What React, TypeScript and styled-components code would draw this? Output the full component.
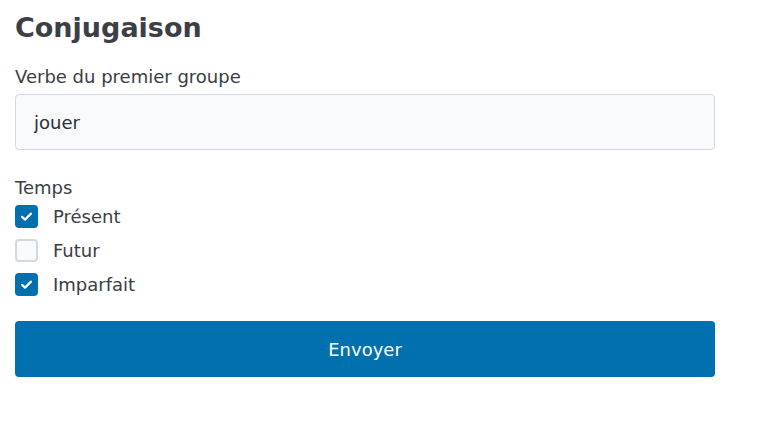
import React, { useState } from "react";
import styled, { createGlobalStyle } from "styled-components";

const GlobalStyle = createGlobalStyle`
  html, body {
    margin: 0;
    padding: 0;
    background: #ffffff;
  }
  body {
    font-family: "DejaVu Sans", "Liberation Sans", sans-serif;
    color: #3a3d42;
  }
`;

const Form = styled.form`
  width: 700px;
  padding: 11px 15px 0 15px;
  display: flex;
  flex-direction: column;
`;

const Title = styled.h1`
  margin: 0;
  font-size: 27px;
  line-height: 34px;
  font-weight: 700;
  color: #3c4046;
`;

const FieldLabel = styled.label`
  margin-top: 21px;
  font-size: 18px;
  line-height: 22px;
  color: #3a3d42;
`;

const TextInput = styled.input`
  margin-top: 6px;
  box-sizing: border-box;
  width: 100%;
  height: 56px;
  padding: 0 18px;
  border: 1px solid #d3d8e6;
  border-radius: 4px;
  background: #f9fafb;
  font-family: inherit;
  font-size: 18px;
  color: #2b2f36;
  outline: none;
`;

const Group = styled.div`
  margin-top: 27px;
  display: flex;
  flex-direction: column;
`;

const GroupTitle = styled.div`
  font-size: 18px;
  line-height: 22px;
  color: #3a3d42;
`;

const Options = styled.div`
  margin-top: 6px;
  display: flex;
  flex-direction: column;
  gap: 11px;
`;

const OptionRow = styled.label`
  display: flex;
  align-items: center;
  gap: 15px;
  height: 23px;
  font-size: 18px;
  line-height: 22px;
  cursor: pointer;
  color: #3a3d42;
`;

const Box = styled.span<{ $checked: boolean }>`
  box-sizing: border-box;
  flex: none;
  width: 23px;
  height: 23px;
  border-radius: 4px;
  display: flex;
  align-items: center;
  justify-content: center;
  background: ${(p) => (p.$checked ? "#0070ae" : "#f9fafb")};
  border: ${(p) => (p.$checked ? "none" : "2px solid #d3d8e6")};
`;

const HiddenInput = styled.input`
  position: absolute;
  opacity: 0;
  width: 0;
  height: 0;
  margin: 0;
`;

const SubmitButton = styled.button`
  margin-top: 25px;
  width: 100%;
  height: 56px;
  border: none;
  border-radius: 4px;
  background: #0070ae;
  color: #ffffff;
  font-family: inherit;
  font-size: 18px;
  cursor: pointer;
`;

const CheckMark = () => (
  <svg width="15" height="15" viewBox="0 0 15 15">
    <path
      d="M3 7.8 L6 10.6 L12 4.6"
      fill="none"
      stroke="#ffffff"
      strokeWidth="2.2"
      strokeLinecap="round"
      strokeLinejoin="round"
    />
  </svg>
);

const tenses = ["Présent", "Futur", "Imparfait"];

export default function App() {
  const [verb, setVerb] = useState("jouer");
  const [checked, setChecked] = useState<Record<string, boolean>>({
    Présent: true,
    Futur: false,
    Imparfait: true,
  });

  return (
    <>
      <GlobalStyle />
      <Form onSubmit={(e) => e.preventDefault()}>
        <Title>Conjugaison</Title>
        <FieldLabel htmlFor="verb">Verbe du premier groupe</FieldLabel>
        <TextInput id="verb" value={verb} onChange={(e) => setVerb(e.target.value)} />
        <Group role="group" aria-label="Temps">
          <GroupTitle>Temps</GroupTitle>
          <Options>
            {tenses.map((t) => (
              <OptionRow key={t}>
                <HiddenInput
                  type="checkbox"
                  checked={checked[t]}
                  onChange={() => setChecked((c) => ({ ...c, [t]: !c[t] }))}
                />
                <Box $checked={checked[t]}>{checked[t] && <CheckMark />}</Box>
                {t}
              </OptionRow>
            ))}
          </Options>
        </Group>
        <SubmitButton type="submit">Envoyer</SubmitButton>
      </Form>
    </>
  );
}
